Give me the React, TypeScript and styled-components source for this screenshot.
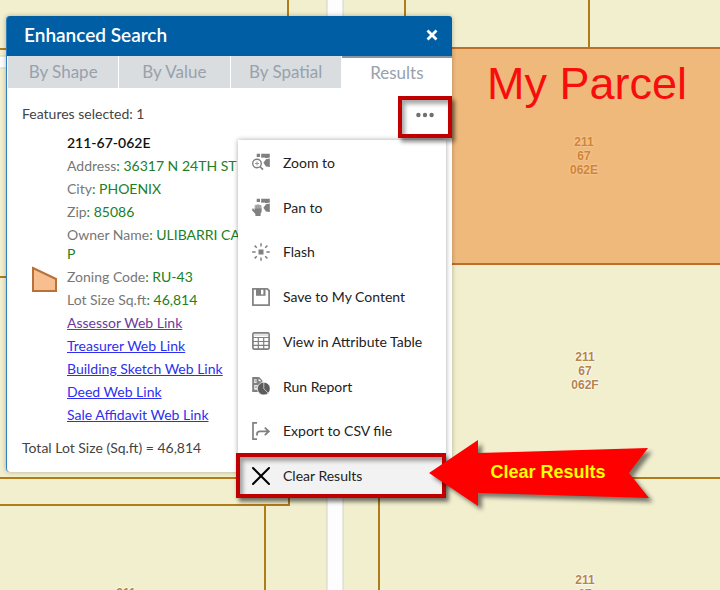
import React from "react";
import styled, { createGlobalStyle, css } from "styled-components";

const GlobalStyle = createGlobalStyle`
  * { box-sizing: border-box; }
  html, body { margin: 0; padding: 0; }
  body { overflow: hidden; font-family: Lato, "Open Sans", sans-serif; font-size: 14px; line-height: 19px; color: #444; }
  button { font: inherit; color: inherit; background: none; border: 0; padding: 0; cursor: pointer; }
`;

const MapPage = styled.main`
  position: relative;
  width: 100%;
  height: 100vh;
  overflow: hidden;
  background: #f2efcf;
`;

const MapCanvas = styled.svg`
  position: absolute;
  inset: 0;
  width: 100%;
  height: 100%;
`;

const ParcelLabel = styled.div<{ $x: number; $y: number; $selected?: boolean }>`
  position: absolute;
  left: ${(p) => p.$x}px;
  top: ${(p) => p.$y}px;
  transform: translateX(-50%);
  font: bold 12px/14px "Liberation Sans", Arial, sans-serif;
  text-align: center;
  white-space: pre-line;
  color: ${(p) => (p.$selected ? "#cf8536" : "#b5854a")};
  text-shadow: ${(p) =>
    p.$selected
      ? "0 0 2px #f8cda0, 0 0 2px #f8cda0"
      : "0 0 2px #fff, 0 0 2px #fff, 0 0 2px #fff, 0 0 1px #fff"};
`;

const ParcelTitle = styled.h1`
  position: absolute;
  left: 487px;
  top: 58px;
  margin: 0;
  font: 45px/52px "Liberation Sans", Arial, sans-serif;
  color: #f80d0d;
  white-space: nowrap;
`;

const Panel = styled.section`
  position: absolute;
  left: 6px;
  top: 16px;
  width: 446px;
  border-left: 1px solid #2f7fbe;
  border-radius: 4px;
  background: #fff;
  box-shadow: 0 0 5px rgba(0, 0, 0, 0.28);
`;

const PanelHeader = styled.header`
  display: flex;
  align-items: center;
  justify-content: space-between;
  height: 40px;
  padding: 0 14px 2px 17px;
  border-radius: 3px 3px 0 0;
  background: #005ea5;
  color: #fff;
`;

const PanelTitle = styled.h2`
  margin: 0;
  font-size: 19px;
  line-height: 24px;
  font-weight: 600;
`;

const CloseButton = styled.button`
  display: flex;
`;

const TabBar = styled.div`
  display: grid;
  grid-template-columns: repeat(4, 1fr);
  gap: 1px;
  padding-left: 1px;
`;

const Tab = styled.button<{ $active?: boolean }>`
  && {
    height: 32px;
    font-size: 17px;
    line-height: 24px;
    color: #98a1ac;
    background: #d9dde0;
  }
  ${(p) =>
    p.$active &&
    css`
      && {
        background: #fff;
        border-top: 2px solid #8995a3;
      }
    `}
`;

const Results = styled.div`
  position: relative;
  padding: 16px 0 15px 15px;
`;

const Summary = styled.p`
  margin: 0;
`;

const Feature = styled.div`
  display: grid;
  grid-template-columns: 25px 1fr;
  align-items: center;
  gap: 10px;
  margin: 10px 0 14px;
  padding-left: 10px;
`;

const FeatureDetails = styled.div`
  display: flex;
  flex-direction: column;
  align-items: flex-start;
  gap: 4px;
`;

const FeatureName = styled.strong`
  font-weight: 600;
  color: #111;
`;

const Field = styled.div`
  color: #777;
`;

const Value = styled.span`
  color: #21801f;
`;

const DetailLink = styled.a<{ $visited?: boolean }>`
  color: ${(p) => (p.$visited ? "#6b3a9e" : "#2f2fee")};
  text-decoration: underline;
`;

const Highlight = styled.span`
  position: absolute;
  inset: 0;
  border: 4px solid #c00000;
  box-shadow: 3px 4px 4px rgba(0, 0, 0, 0.45), inset 3px 4px 4px rgba(0, 0, 0, 0.35);
  pointer-events: none;
`;

const MoreActions = styled.div`
  position: absolute;
  top: 8px;
  right: 0;
  display: flex;
  width: 54px;
  height: 42px;
`;

const MoreButton = styled.button`
  flex: 1;
  display: flex;
  justify-content: center;
  && { padding-top: 16px; }
`;

const Menu = styled.div`
  position: absolute;
  top: 52px;
  right: 6px;
  display: grid;
  grid-auto-rows: 1fr;
  width: 208px;
  height: 358px;
  background: #fff;
  box-shadow: 0 0 5px rgba(0, 0, 0, 0.35);
`;

const MenuItem = styled.button<{ $active?: boolean }>`
  && {
    position: relative;
    display: flex;
    align-items: center;
    gap: 13px;
    padding: 0 14px;
    color: #222;
    background: ${(p) => (p.$active ? "#f2f2f2" : "transparent")};
    white-space: nowrap;
  }
`;

const Callout = styled.div`
  position: absolute;
  left: 429px;
  top: 440px;
  display: grid;
  width: 220px;
  height: 66px;
  place-items: center;
  padding-left: 18px;
  font: bold 18px/22px "Liberation Sans", Arial, sans-serif;
  color: #ff0;
`;

const CalloutShape = styled.svg`
  position: absolute;
  inset: 0;
  overflow: visible;
  filter: drop-shadow(4px 4px 2px rgba(0, 0, 0, 0.5));
`;

const CalloutText = styled.span`
  position: relative;
  padding-bottom: 2px;
`;

const Icon = ({ children }: { children: React.ReactNode }) => (
  <svg width="18" height="18" viewBox="0 0 18 18" fill="#808080" stroke="none" aria-hidden="true">
    {children}
  </svg>
);

const Blocks = () => (
  <>
    <path d="M4.7 .8H8v3.2H4.7zM9.2.8H17.8V4.4L14 5.2 12.5 4.6 9.2 4.8z" />
    <path d="M17.8 5.4V14L14 13.4 11.4 9.8 14 6.2z" />
  </>
);

const ZoomIcon = () => (
  <Icon>
    <Blocks />
    <circle cx="5" cy="10.5" r="4.3" fill="#fff" stroke="#808080" strokeWidth="1.4" />
    <path d="M3 10.5h4M5 8.5v4" stroke="#999" fill="none" />
    <path d="M8 13.6l3 3" stroke="#808080" strokeWidth="1.6" />
  </Icon>
);

const PanIcon = () => (
  <Icon>
    <Blocks />
    <path
      d="M2 6.8Q2.8 5.8 3.8 6.2 5 5 6.2 5.8 7.6 5.2 8.4 6.2 10 6 10.2 7.4V13.5Q10 15 9 15.8V18.4H3V16L-.2 12.4V10.4L1 10.2 2 11z"
      fill="#fff"
    />
    <path d="M2.6 7.2Q3.4 6.4 4.2 7 5.2 5.8 6.2 6.6 7.4 6 8 7 9.4 6.8 9.6 7.8V12H2.6z" fill="#b0b0b0" />
    <path d="M.2 10.6L1.2 10.6 2.6 12V10.5H9.6V13.2Q9.6 14.6 8.6 15.4V18H3.4V16L.2 12.4z" />
    <path d="M4.4 7.2v4M6.2 7v4.2M8 7.2v4" stroke="#8a8a8a" strokeWidth=".6" />
  </Icon>
);

const FlashIcon = () => (
  <Icon>
    <path d="M6.5 6.5h5v5h-5z" />
    <path
      d="M9 .3v3.2M9 14.5v3.2M.2 9h3.4M14.4 9h3.4M2.6 2.6l2.2 2.2M13.2 13.2l2.2 2.2M15.4 2.6l-2.2 2.2M4.8 13.2l-2.2 2.2"
      stroke="#808080"
      strokeWidth="1.5"
    />
  </Icon>
);

const SaveIcon = () => (
  <Icon>
    <path d="M.9.9H15.4L17.1 2.6V17.1H.9z" fill="none" stroke="#858585" strokeWidth="1.8" />
    <path d="M4 .8h9.5v7H4z" />
    <path d="M9 1.8h2.4v4.6H9z" fill="#fff" />
  </Icon>
);

const TableIcon = () => (
  <Icon>
    <rect x=".9" y=".9" width="16.2" height="16.2" rx="1.4" fill="#fff" stroke="#808080" strokeWidth="1.7" />
    <path d="M1 5.5h16M1 9.5h16M1 13.4h16M6.3 5.5v12M11.7 5.5v12" fill="none" stroke="#808080" strokeWidth="1.2" />
    <path d="M1 3h16" stroke="#bbb" strokeWidth=".8" />
  </Icon>
);

const ReportIcon = () => (
  <Icon>
    <path d="M.2 0H7.2L10.4 3.4V8L7 15H.2z" />
    <path d="M6.6 1.4V4.2h3M2.2 2.2h2.4V6H2.2zM2.2 8h3.4v4.8H2.2z" fill="#eee" />
    <path d="M3 10h2M3 4h1.4" stroke="#808080" />
    <circle cx="11.8" cy="11.6" r="6.4" fill="#5c5c5c" stroke="#fff" strokeWidth=".7" />
    <path d="M11.8 5.2v6.4l4.4 4.6" fill="none" stroke="#ddd" strokeWidth=".8" />
  </Icon>
);

const ExportIcon = () => (
  <Icon>
    <path d="M5 .9H1v16.2h4" fill="none" stroke="#808080" strokeWidth="1.7" />
    <path d="M5 13.4V12q0-2.6 2.8-2.6H16M12.8 5.6L16.8 9.4l-4 3.8" fill="none" stroke="#808080" strokeWidth="1.8" />
  </Icon>
);

const ClearIcon = () => (
  <Icon>
    <path d="M1 1l16 16M17 1L1 17" stroke="#000" strokeWidth="2" strokeLinecap="round" />
  </Icon>
);

const menuItems: { label: string; icon: React.ReactNode; active?: boolean }[] = [
  { label: "Zoom to", icon: <ZoomIcon /> },
  { label: "Pan to", icon: <PanIcon /> },
  { label: "Flash", icon: <FlashIcon /> },
  { label: "Save to My Content", icon: <SaveIcon /> },
  { label: "View in Attribute Table", icon: <TableIcon /> },
  { label: "Run Report", icon: <ReportIcon /> },
  { label: "Export to CSV file", icon: <ExportIcon /> },
  { label: "Clear Results", icon: <ClearIcon />, active: true },
];

const MenuHighlight = styled(Highlight)`
  inset: 0 0 0 -2px;
`;

const fields: { name: string; value: React.ReactNode }[] = [
  { name: "Address", value: "36317 N 24TH ST" },
  { name: "City", value: "PHOENIX" },
  { name: "Zip", value: "85086" },
  { name: "Owner Name", value: <>ULIBARRI CAR<br />P</> },
  { name: "Zoning Code", value: "RU-43" },
  { name: "Lot Size Sq.ft", value: "46,814" },
];

const links = [
  "Assessor Web Link",
  "Treasurer Web Link",
  "Building Sketch Web Link",
  "Deed Web Link",
  "Sale Affidavit Web Link",
];

const tabs = ["By Shape", "By Value", "By Spatial", "Results"];

const ParcelMap = () => (
  <MapCanvas aria-hidden="true">
    <rect x="-2" y="56" width="329" height="12" fill="#fdfdfd" stroke="#d8d6c4" />
    <rect x="327" y="-2" width="16" height="200%" fill="#fdfdfd" stroke="#d4d3c8" />
    <g stroke="#b07c1a" strokeWidth="2">
      <line x1="0" y1="49" x2="288" y2="49" />
      <line x1="288" y1="0" x2="288" y2="49" />
      <line x1="405" y1="0" x2="405" y2="48" />
      <line x1="589" y1="0" x2="589" y2="48" />
      <line x1="0" y1="277" x2="288" y2="277" />
      <line x1="0" y1="478" x2="288" y2="478" />
      <path d="M0 505H289V478" fill="none" />
      <line x1="265" y1="505" x2="265" y2="100%" />
      <line x1="379" y1="478" x2="379" y2="100%" />
      <line x1="379" y1="478" x2="100%" y2="478" />
    </g>
    <rect x="405" y="48" width="100%" height="216" fill="#f0b97c" stroke="#bc6f2b" strokeWidth="2" />
  </MapCanvas>
);

export default function App() {
  return (
    <>
      <GlobalStyle />
      <MapPage>
        <ParcelMap />
        <ParcelTitle>My Parcel</ParcelTitle>
        <ParcelLabel $x={584} $y={135} $selected>{"211\n67\n062E"}</ParcelLabel>
        <ParcelLabel $x={585} $y={350}>{"211\n67\n062F"}</ParcelLabel>
        <ParcelLabel $x={585} $y={573}>{"211\n67"}</ParcelLabel>
        <ParcelLabel $x={126} $y={586}>211</ParcelLabel>

        <Panel>
          <PanelHeader>
            <PanelTitle>Enhanced Search</PanelTitle>
            <CloseButton aria-label="Close">
              <svg width="12" height="12" viewBox="0 0 12 12">
                <path d="M1.5 1.5l9 9M10.5 1.5l-9 9" stroke="#fff" strokeWidth="2.8" />
              </svg>
            </CloseButton>
          </PanelHeader>
          <TabBar role="tablist">
            {tabs.map((tab) => (
              <Tab key={tab} role="tab" aria-selected={tab === "Results"} $active={tab === "Results"}>
                {tab}
              </Tab>
            ))}
          </TabBar>
          <Results>
            <Summary>Features selected: 1</Summary>
            <Feature>
              <svg width="25" height="26" viewBox="0 0 25 26" aria-hidden="true">
                <path d="M1 2L24 13V25H1z" fill="#f7bf8f" stroke="#b9713a" strokeWidth="2" />
              </svg>
              <FeatureDetails>
                <FeatureName>211-67-062E</FeatureName>
                {fields.map((f) => (
                  <Field key={f.name}>
                    {f.name}
                    <Value>: {f.value}</Value>
                  </Field>
                ))}
                {links.map((link, i) => (
                  <DetailLink key={link} href="#" $visited={i === 0}>
                    {link}
                  </DetailLink>
                ))}
              </FeatureDetails>
            </Feature>
            <Summary>Total Lot Size (Sq.ft) = 46,814</Summary>
            <Menu role="menu">
              {menuItems.map((item) => (
                <MenuItem key={item.label} role="menuitem" $active={item.active}>
                  {item.icon}
                  {item.label}
                  {item.active && <MenuHighlight />}
                </MenuItem>
              ))}
            </Menu>
            <MoreActions>
              <MoreButton aria-label="More actions">
                <svg width="18" height="6" viewBox="0 0 18 6" fill="#707070">
                  <circle cx="2.4" cy="3" r="2.2" />
                  <circle cx="9" cy="3" r="2.2" />
                  <circle cx="15.6" cy="3" r="2.2" />
                </svg>
              </MoreButton>
              <Highlight />
            </MoreActions>
          </Results>
        </Panel>

        <Callout>
          <CalloutShape width="220" height="66" viewBox="0 0 220 66" aria-hidden="true">
            <path d="M0 33L49 0V13L219 8 200 33 220 58 49 53V66z" fill="#f00" />
          </CalloutShape>
          <CalloutText>Clear Results</CalloutText>
        </Callout>
      </MapPage>
    </>
  );
}
